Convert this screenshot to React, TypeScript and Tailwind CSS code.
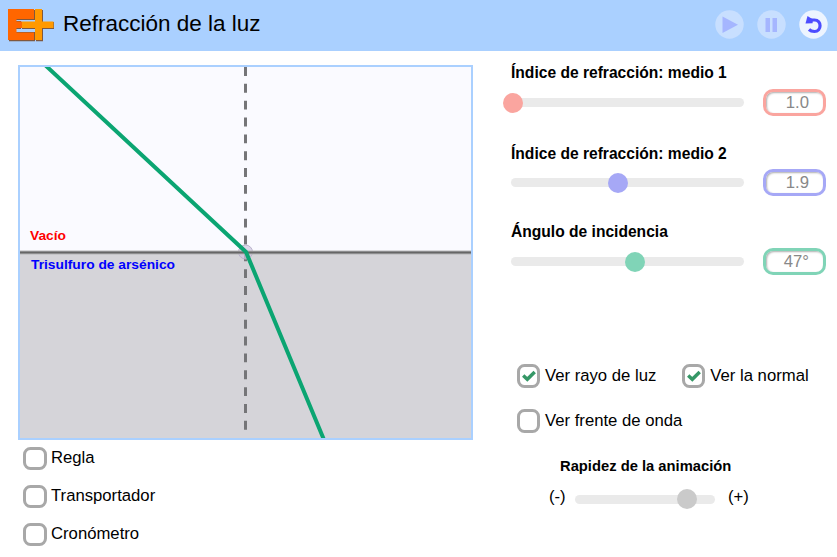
import React from 'react';

type SliderProps = { value: number; color: string; width: string };

function Slider({ value, color, width }: SliderProps) {
  return (
    <div className={`relative h-[9px] rounded-full bg-[#eaeaea] ${width}`}>
      <div
        className={`absolute top-1/2 size-5 -translate-x-1/2 -translate-y-1/2 rounded-full ${color}`}
        style={{ left: value }}
      />
    </div>
  );
}

type ControlProps = {
  label: string;
  value: string;
  position: number;
  thumb: string;
  border: string;
  className: string;
};

function Control({ label, value, position, thumb, border, className }: ControlProps) {
  return (
    <div className={className}>
      <div className="whitespace-nowrap text-[15.600px] leading-[18px] font-bold">{label}</div>
      <div className="flex h-[27px] items-center">
        <Slider value={position} color={thumb} width="w-[233px]" />
        <div
          className={`ml-[19px] h-[27px] w-[63px] rounded-[10px] border-[3px] bg-white pr-[14px] text-right text-[16.700px] leading-[21px] text-[#888] shadow-[inset_1px_1px_2px_#b0b0b0] ${border}`}
        >
          {value}
        </div>
      </div>
    </div>
  );
}

type CheckProps = { label: string; checked?: boolean; size?: string; shift?: string };

function Check({ label, checked, size = 'w-[23px] h-6', shift = 'ml-[5px]' }: CheckProps) {
  return (
    <label className="flex items-center whitespace-nowrap text-[16.700px] leading-6">
      <span className={`flex items-center justify-center rounded-[7.500px] border-3 border-[#a8a8a8] bg-white ${size}`}>
        {checked && (
          <svg width="14" height="12" viewBox="0 0 14 12" fill="none" stroke="#359766" strokeWidth="3.4">
            <path d="M1.2 5.5 5.3 9.3 12.7 2" />
          </svg>
        )}
      </span>
      <span className={shift}>{label}</span>
    </label>
  );
}

function Logo() {
  return (
    <svg width="48" height="34" viewBox="0 0 48 34">
      <path d="M1 1h26v10H1zM1 20h12v-8H1zM1 23h26v9.300H1z" fill="#80583e" />
      <path d="M28 1h7v12h11v7H35v12.300h-7v-12.300H14v-7h14z" fill="#80583e" />
      <path d="M0 0h26v10H8.500v2.500H14V19H8.500v4.500H26V31H0z" fill="#ff6600" />
      <path d="M27 0h7v12.500h11.500V19H34v12h-7V19H14v-6.500h13z" fill="#ff9900" />
    </svg>
  );
}

function Header() {
  return (
    <header className="flex h-[51px] items-start bg-[#aad0ff] pl-2">
      <div className="mt-[9px]">
        <Logo />
      </div>
      <h1 className="mt-2.5 ml-[7px] text-[22.500px] leading-7 whitespace-nowrap">Refracción de la luz</h1>
      <div className="mt-2.5 mr-[9px] ml-auto flex gap-[13px]">
        <svg width="29" height="29" viewBox="0 0 29 29">
          <circle cx="14.500" cy="14.500" r="14.200" fill="#c8dfff" />
          <path d="M7.500 6.500 23 14.800 7.500 23z" fill="#a5b6ff" />
        </svg>
        <svg width="29" height="29" viewBox="0 0 29 29">
          <circle cx="14.500" cy="14.500" r="14.200" fill="#c8dfff" />
          <path d="M8.500 8h4.500v14H8.500zM15.500 8H20v14h-4.500z" fill="#a5b6ff" />
        </svg>
        <svg width="29" height="29" viewBox="0 0 29 29">
          <circle cx="14.500" cy="14.500" r="14.200" fill="#edf4ff" />
          <path d="M11 10H15.500C23 10 22.800 21.500 15.500 21.500 13.200 21.500 11.500 21 10 19.500" fill="none" stroke="#4d4dff" strokeWidth="3.200" />
          <path d="M8.500 6 14 9.500 13.500 13.300 6.500 13.500z" fill="#4d4dff" />
        </svg>
      </div>
    </header>
  );
}

function Diagram() {
  return (
    <div className="h-[375px] w-[455px] border-2 border-[#aad0ff]">
      <svg width="451" height="371" viewBox="0 0 451 371" className="block">
        <rect width="451" height="186" fill="#fafaff" />
        <rect y="186" width="451" height="185" fill="#d5d4d9" />
        <path d="M225.500 0V365" stroke="#757578" strokeWidth="3" strokeDasharray="8.900 7.950" />
        <circle cx="225.500" cy="185" r="7" fill="#cfc6df" fillOpacity="0.700" stroke="#b9b2cb" />
        <path d="M0 185.500H451" stroke="#b5b5b8" strokeWidth="4" />
        <path d="M0 185.500H451" stroke="#666" strokeWidth="2" />
        <path d="M24-3 226 185 304.500 374" fill="none" stroke="#0ba572" strokeWidth="4" />
        <g fontSize="13.400" fontWeight="bold">
          <text x="10" y="172.500" textLength="36" lengthAdjust="spacingAndGlyphs" fill="#ff0000">Vacío</text>
          <text x="11" y="202" textLength="144" lengthAdjust="spacingAndGlyphs" fill="#0000ff">Trisulfuro de arsénico</text>
        </g>
      </svg>
    </div>
  );
}

export default function App() {
  return (
    <div className="h-[557px] w-[837px] overflow-hidden bg-white font-['Liberation_Sans',Arial,sans-serif] text-black">
      <Header />
      <main className="flex">
        <section className="ml-[18px] w-[455px] pt-[14px]">
          <Diagram />
          <div className="mt-1.5 ml-[5px] flex flex-col gap-3.5">
            <Check label="Regla" size="w-6 h-[23px]" shift="ml-1" />
            <Check label="Transportador" size="w-6 h-[23px]" shift="ml-1" />
            <Check label="Cronómetro" size="w-6 h-[23px]" shift="ml-1" />
          </div>
        </section>
        <section className="ml-[38px] w-[326px]">
          <Control label="Índice de refracción: medio 1" value="1.0" position={2} thumb="bg-[#faa59f]" border="border-[#faa59f]" className="flex flex-col gap-[7px] pt-[13px]" />
          <Control label="Índice de refracción: medio 2" value="1.9" position={107} thumb="bg-[#a6a8f6]" border="border-[#a6a8f6]" className="flex flex-col gap-1.5 pt-[29px]" />
          <Control label="Ángulo de incidencia" value="47°" position={124} thumb="bg-[#80d4b7]" border="border-[#80d4b7]" className="flex flex-col gap-[7px] pt-[27px]" />
          <div className="mt-[89px] ml-1.5 flex gap-[26px]">
            <Check label="Ver rayo de luz" checked />
            <Check label="Ver la normal" checked />
          </div>
          <div className="mt-[21px] ml-1.5">
            <Check label="Ver frente de onda" />
          </div>
          <div className="mt-6 ml-[38px] w-[201px]">
            <div className="ml-[11px] text-[14.750px] leading-[18px] font-bold whitespace-nowrap">Rapidez de la animación</div>
            <div className="mt-3.5 flex h-5 items-center text-[16.700px] leading-5">
              <span className="relative -top-0.5 w-[26px]">(-)</span>
              <Slider value={112} color="bg-[#cacaca]" width="w-[140px]" />
              <span className="relative -top-0.5 ml-[13px]">(+)</span>
            </div>
          </div>
        </section>
      </main>
    </div>
  );
}
